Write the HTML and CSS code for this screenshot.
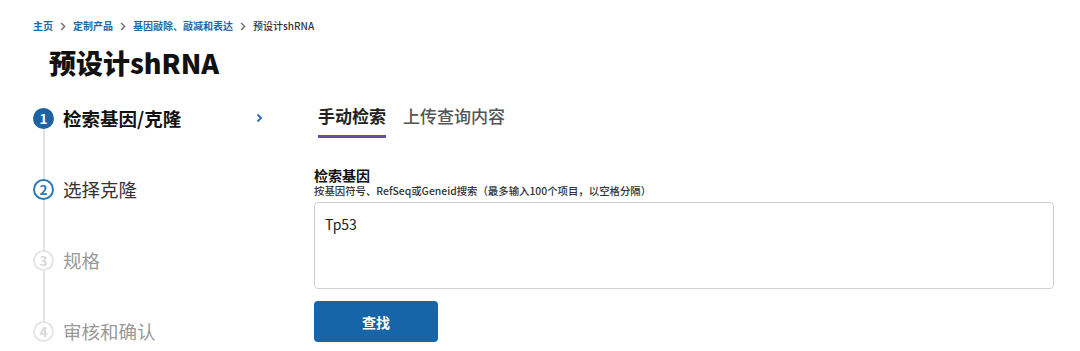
FILE: index.html
```html
<!DOCTYPE html>
<html lang="zh-CN">
<head>
    <meta charset="UTF-8">
    <title>预设计shRNA</title>
    <link rel="stylesheet" href="styles.css">
</head>
<body>

<nav class="breadcrumb">
    <a href="#">主页</a>
    <svg class="sep" width="6" height="9" viewBox="0 0 6 9"><path d="M1.2 1 L4.6 4.5 L1.2 8" fill="none" stroke="#777" stroke-width="1.6"/></svg>
    <a href="#">定制产品</a>
    <svg class="sep" width="6" height="9" viewBox="0 0 6 9"><path d="M1.2 1 L4.6 4.5 L1.2 8" fill="none" stroke="#777" stroke-width="1.6"/></svg>
    <a href="#">基因敲除、敲减和表达</a>
    <svg class="sep" width="6" height="9" viewBox="0 0 6 9"><path d="M1.2 1 L4.6 4.5 L1.2 8" fill="none" stroke="#777" stroke-width="1.6"/></svg>
    <span class="current">预设计shRNA</span>
</nav>

<h1 class="page-title">预设计shRNA</h1>

<div class="layout">
    <ol class="steps">
        <li class="step active">
            <span class="num">1</span>
            <span class="label">检索基因/克隆</span>
            <svg class="arrow" width="7" height="10" viewBox="0 0 7 10"><path d="M1.5 1.5 L5 5 L1.5 8.5" fill="none" stroke="#2a6fae" stroke-width="1.8"/></svg>
        </li>
        <li class="step next">
            <span class="num">2</span>
            <span class="label">选择克隆</span>
        </li>
        <li class="step">
            <span class="num">3</span>
            <span class="label">规格</span>
        </li>
        <li class="step last">
            <span class="num">4</span>
            <span class="label">审核和确认</span>
        </li>
    </ol>

    <div class="content">
        <div class="tabs">
            <div class="tab selected">手动检索</div>
            <div class="tab">上传查询内容</div>
        </div>

        <div class="field">
            <label for="gene">检索基因</label>
            <p class="hint">按基因符号、RefSeq或Geneid搜索（最多输入100个项目，以空格分隔）</p>
            <textarea id="gene">Tp53</textarea>
        </div>

        <button class="search-btn">查找</button>
    </div>
</div>

</body>
</html>
```

FILE: styles.css
```css
/* Reset */
* {
    margin: 0;
    padding: 0;
    box-sizing: border-box;
}

body {
    font-family: "Noto Sans CJK SC", "Noto Sans", sans-serif;
    background: #fff;
    color: #222;
    padding: 18px 0 0 33px;
    overflow: hidden;
}

/* Breadcrumb */
.breadcrumb {
    display: flex;
    align-items: center;
    gap: 7px;
    font-size: 10px;
    font-weight: 700;
    line-height: 16px;
}

.breadcrumb a {
    color: #1f6aa6;
    text-decoration: none;
}

.breadcrumb .current {
    color: #333;
    font-weight: 500;
}

/* Title */
.page-title {
    font-size: 27px;
    font-weight: 900;
    color: #111;
    margin: 9px 0 0 16px;
    line-height: 40px;
}

/* Layout */
.layout {
    display: flex;
    margin-top: 24px;
}

/* Steps */
.steps {
    list-style: none;
    width: 281px;
    flex-shrink: 0;
}

.step {
    position: relative;
    display: flex;
    align-items: flex-start;
    height: 71px;
}

.step::after {
    content: "";
    position: absolute;
    left: 10px;
    top: 22px;
    bottom: -2px;
    width: 1.5px;
    background: #e2e2e2;
}

.step.last {
    height: 30px;
}

.step.last::after {
    display: none;
}

.step .num {
    width: 21px;
    height: 21px;
    border-radius: 50%;
    border: 2px solid #e6e6e6;
    color: #d8d8d8;
    font-size: 13.5px;
    font-weight: 700;
    line-height: 1;
    display: flex;
    align-items: center;
    justify-content: center;
    flex-shrink: 0;
    margin-top: 1px;
}

.step .label {
    margin-left: 9px;
    font-size: 18.5px;
    line-height: 22px;
    color: #999;
}

.step.active .num {
    background: #1d63a3;
    border-color: #1d63a3;
    color: #fff;
}

.step.active .label {
    color: #111;
    font-weight: 700;
}

.step.next .num {
    border-color: #2f77b5;
    color: #2f77b5;
}

.step.next .label {
    color: #333;
}

.step .arrow {
    margin-left: auto;
    margin-right: 51px;
    margin-top: 6px;
}

/* Content */
.content {
    width: 740px;
}

.tabs {
    display: flex;
    gap: 17px;
    margin: -2px 0 0 4px;
}

.tab {
    font-size: 17px;
    font-weight: 500;
    color: #555;
    line-height: 22px;
    padding-bottom: 8px;
}

.tab.selected {
    color: #222;
    font-weight: 700;
    border-bottom: 3px solid #6a4cad;
}

.field {
    margin-top: 28px;
}

.field label {
    display: block;
    font-size: 14px;
    font-weight: 700;
    color: #111;
    line-height: 18px;
}

.hint {
    font-size: 10.4px;
    font-weight: 500;
    color: #333;
    line-height: 14px;
}

textarea {
    display: block;
    width: 740px;
    height: 87px;
    margin-top: 4px;
    padding: 11px 10px;
    border: 1px solid #cfcfcf;
    border-radius: 4px;
    font-family: "Noto Sans CJK SC", "Noto Sans", sans-serif;
    font-size: 14px;
    color: #222;
    resize: none;
}

.search-btn {
    margin-top: 12px;
    width: 124px;
    height: 41px;
    background: #1565a8;
    color: #fff;
    border: none;
    border-radius: 4px;
    font-family: "Noto Sans CJK SC", sans-serif;
    font-size: 14px;
    font-weight: 700;
}
```
